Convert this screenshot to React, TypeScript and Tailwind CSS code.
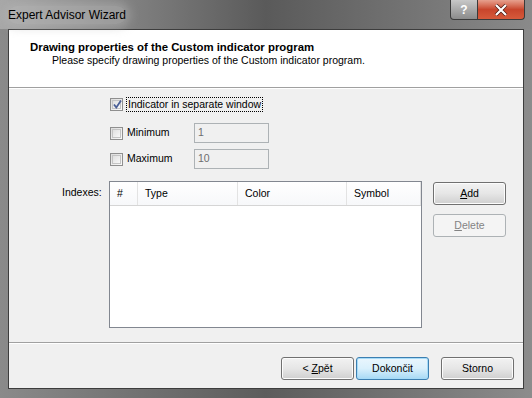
import React from 'react';

const font = { fontFamily: '"Liberation Sans", Arial, sans-serif' };

interface ColumnDef {
    id: string;
    label: string;
    width: number;
}

const columns: ColumnDef[] = [
    { id: 'num', label: '#', width: 28 },
    { id: 'type', label: 'Type', width: 100 },
    { id: 'color', label: 'Color', width: 109 },
    { id: 'symbol', label: 'Symbol', width: 74 }
];

const Checkbox: React.FC<{ checked?: boolean }> = ({ checked }) => (
    <span className="relative flex h-[13px] w-[13px] shrink-0 items-center justify-center border border-[#8f8f8f] bg-gradient-to-br from-[#dcdcdc] to-[#fbfbfb]">
        <span className="h-[9px] w-[9px] border border-[#c4c4c4] bg-gradient-to-br from-[#e0e0e0] to-[#f8f8f8]" />
        {checked && (
            <svg className="absolute left-[1px] top-[0px]" width="11" height="11" viewBox="0 0 11 11">
                <path d="M2 5.5 L4.3 8.5 L9 1.5" fill="none" stroke="#4a5f97" strokeWidth="1.8" />
            </svg>
        )}
    </span>
);

const WinButton: React.FC<{ children: React.ReactNode; isDefault?: boolean; disabled?: boolean; className?: string }> = ({
    children,
    isDefault,
    disabled,
    className
}) => {
    if (disabled) {
        return (
            <div className={`flex h-[23px] w-[73px] items-center justify-center rounded-[3px] border border-[#adb2b5] bg-[#f4f4f4] text-[10.5px] text-[#838383] ${className ?? ''}`}>
                {children}
            </div>
        );
    }
    return (
        <div
            className={`flex h-[23px] w-[73px] items-center justify-center rounded-[3px] border text-[10.5px] text-black ${
                isDefault
                    ? 'border-[#3c7fb1] bg-gradient-to-b from-[#eaf6fd] via-[#d9f0fc] to-[#a7d9f5] shadow-[inset_0_0_0_1px_#a6dbf8]'
                    : 'border-[#707070] bg-gradient-to-b from-[#f2f2f2] via-[#e6e6e6] to-[#cfcfcf] shadow-[inset_0_0_0_1px_#fcfcfc]'
            } ${className ?? ''}`}
        >
            {children}
        </div>
    );
};

const App: React.FC = () => {
    return (
        <div className="relative h-[398px] w-[532px] overflow-hidden bg-[#6b6b6b]" style={font}>
            {/* window frame */}
            <div className="flex h-full w-full flex-col bg-gradient-to-r from-[#8a8a8a] via-[#5c5c5c] to-[#8c8c8c]">
                <div className="relative flex h-[29px] shrink-0 items-center bg-gradient-to-r from-[#a8a8a8] via-[#5a5a5a] to-[#8a8a8a] pl-[8px]">
                    <span className="rounded-[10px] bg-[#bdbdbd]/40 text-[12px] text-black shadow-[0_0_10px_4px_rgba(185,185,185,0.45)]">
                        Expert Advisor Wizard
                    </span>
                    <div className="absolute right-[7px] top-0 flex h-[20px]">
                        <div className="flex w-[28px] items-center justify-center rounded-bl-[4px] border border-t-0 border-[#3a3a3a] bg-gradient-to-b from-[#c8c8c8] to-[#8b8b8b] text-[12px] font-bold text-white">
                            ?
                        </div>
                        <div className="flex w-[47px] items-center justify-center rounded-br-[4px] border border-l-0 border-t-0 border-[#3a3a3a] bg-gradient-to-b from-[#e6a08e] via-[#c8452c] to-[#d65a3b]">
                            <svg width="14" height="12" viewBox="0 0 14 12">
                                <path d="M2 1 L12 11 M12 1 L2 11" stroke="#4c1a12" strokeWidth="3.6" />
                                <path d="M2 1 L12 11 M12 1 L2 11" stroke="#ffffff" strokeWidth="2.2" />
                            </svg>
                        </div>
                    </div>
                </div>

                {/* client area */}
                <div className="mx-[8px] flex h-[360px] flex-col border border-[#3d3d3d] bg-[#f0f0f0]">
                    <div className="h-[58px] shrink-0 border-b border-[#a0a0a0] bg-white pl-[21px] pt-[10px]">
                        <div className="text-[11.4px] font-bold leading-[14px] text-black">
                            Drawing properties of the Custom indicator program
                        </div>
                        <div className="pl-[22px] text-[10.5px] leading-[13px] text-black">
                            Please specify drawing properties of the Custom indicator program.
                        </div>
                    </div>
                    <div className="border-t border-white" />

                    <div className="flex flex-1 flex-col pl-[53px] pt-[8px] text-[10.5px]">
                        <div className="ml-[48px] flex h-[15px] items-center gap-[3px]">
                            <Checkbox checked />
                            <span className="border border-dotted border-black px-[1px] leading-[13px]">
                                Indicator in separate window
                            </span>
                        </div>

                        <div className="ml-[48px] mt-[11px] flex items-center">
                            <Checkbox />
                            <span className="ml-[4px] w-[67px]">Minimum</span>
                            <div className="flex h-[20px] w-[75px] items-center border border-[#adb2b5] bg-[#f0f0f0] pl-[3px] text-[#6d6d6d]">
                                1
                            </div>
                        </div>

                        <div className="ml-[48px] mt-[6px] flex items-center">
                            <Checkbox />
                            <span className="ml-[4px] w-[67px]">Maximum</span>
                            <div className="flex h-[20px] w-[75px] items-center border border-[#adb2b5] bg-[#f0f0f0] pl-[3px] text-[#6d6d6d]">
                                10
                            </div>
                        </div>

                        <div className="mt-[12px] flex">
                            <span className="w-[47px] pt-[4px]">Indexes:</span>
                            <div className="h-[147px] w-[313px] border border-[#828790] bg-white">
                                <div className="flex h-[24px] border-b border-[#d5d5d5] bg-gradient-to-b from-white to-[#f7f8fa]">
                                    {columns.map(col => (
                                        <div
                                            key={col.id}
                                            className="flex items-center border-r border-[#e3e3e3] pl-[7px]"
                                            style={{ width: col.width }}
                                        >
                                            {col.label}
                                        </div>
                                    ))}
                                </div>
                            </div>
                            <div className="ml-[11px] flex flex-col gap-[9px] pt-[1px]">
                                <WinButton>
                                    <span className="underline">A</span>dd
                                </WinButton>
                                <WinButton disabled>
                                    <span className="underline">D</span>elete
                                </WinButton>
                            </div>
                        </div>
                    </div>

                    <div className="border-t border-[#a0a0a0]" />
                    <div className="border-t border-white" />
                    <div className="flex h-[44px] shrink-0 items-start pl-[272px] pt-[13px]">
                        <WinButton>
                            &lt; <span className="ml-[3px] underline">Z</span>pět
                        </WinButton>
                        <WinButton isDefault className="ml-[2px]">
                            Dokončit
                        </WinButton>
                        <WinButton className="ml-[12px]">Storno</WinButton>
                    </div>
                </div>
            </div>
        </div>
    );
};

export default App;
